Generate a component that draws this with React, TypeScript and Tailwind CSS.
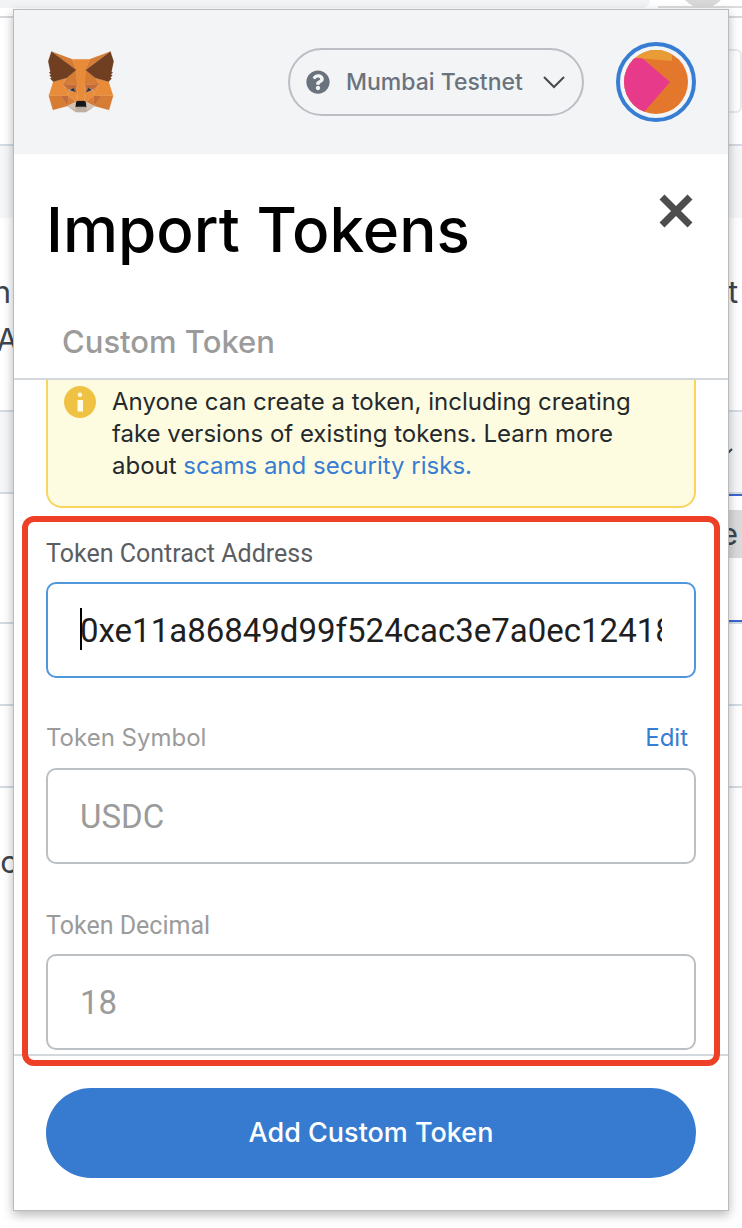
import type { ReactNode } from "react";
import { FaQuestionCircle } from "react-icons/fa";

function Fox() {
  const shapes: [string, string[]][] = [
    ["#d67c35", [
      "274.1,35.5 174.6,109.4 193,65.8",
      "44.4,35.5 143.1,110.1 125.6,65.8",
      "238.3,206.8 211.8,247.4 268.5,263 284.8,207.7",
      "33.9,207.7 50.1,263 106.8,247.4 80.3,206.8",
      "103.6,138.2 87.8,162.1 144.1,164.6 142.1,104.1",
      "214.9,138.2 175.9,103.4 174.6,164.6 230.8,162.1",
      "106.8,247.4 140.6,230.9 111.4,208.1",
      "177.9,230.9 211.8,247.4 207.1,208.1",
    ]],
    ["#d5c3b6", [
      "211.8,247.4 177.9,230.9 180.6,253 180.3,262.3",
      "106.8,247.4 138.3,262.3 138.1,253 140.6,230.9",
    ]],
    ["#c46b37", [
      "106.8,247.4 111.6,206.8 80.3,207.7",
      "207,206.8 211.8,247.4 238.3,207.7",
      "230.8,162.1 174.6,164.6 179.8,193.5 188.1,176.1 208.1,185.2",
      "110.6,185.2 130.6,176.1 138.8,193.5 144.1,164.6 87.8,162.1",
    ]],
    ["#e18537", [
      "87.8,162.1 111.4,208.1 110.6,185.2",
      "208.1,185.2 207.1,208.1 230.8,162.1",
      "144.1,164.6 138.8,193.5 145.4,227.6 146.9,182.7",
      "174.6,164.6 171.9,182.6 173.1,227.6 179.8,193.5",
    ]],
    ["#e88c3a", [
      "179.8,193.5 173.1,227.6 177.9,230.9 207.1,208.1 208.1,185.2",
      "110.6,185.2 111.4,208.1 140.6,230.9 145.4,227.6 138.8,193.5",
      "267.2,153.5 214.9,138.2 230.8,162.1 207.1,208.1 238.3,207.7 284.8,207.7",
      "103.6,138.2 51.3,153.5 33.9,207.7 80.3,207.7 111.4,208.1 87.8,162.1",
      "174.6,164.6 177.9,106.9 193.1,65.8 125.6,65.8 140.6,106.9 144.1,164.6 145.3,182.8 145.4,227.6 173.1,227.6 173.3,182.8",
    ]],
    ["#2a3544", [
      "138.8,193.5 115,185.5 130.5,176.1",
      "179.7,193.5 188,176.1 203,185.5",
    ]],
    ["#bfae9f", [
      "180.3,262.3 180.6,253 178.1,250.8 140.4,250.8 138.1,253 138.3,262.3 106.8,247.4 117.8,256.4 140.1,271.9 178.4,271.9 200.8,256.4 211.8,247.4",
    ]],
    ["#161616", [
      "177.9,230.9 173.1,227.6 145.4,227.6 140.6,230.9 138.1,253 140.4,250.8 178.1,250.8 180.6,253",
    ]],
    ["#703f22", [
      "278.3,114.2 286.8,73.4 274.1,35.5 177.9,106.9 214.9,138.2 267.2,153.5 278.8,140 273.8,136.4 281.8,129.1 275.6,124.3 283.6,118.2",
      "31.8,73.4 40.3,114.2 34.9,118.2 42.9,124.3 36.8,129.1 44.8,136.4 39.8,140 51.3,153.5 103.6,138.2 140.6,106.9 44.4,35.5",
    ]],
  ];
  return (
    <svg viewBox="31 34 257 240" className="h-[62px] w-[66px]" aria-label="MetaMask" role="img">
      {shapes.map(([fill, polys]) =>
        polys.map((points) => (
          <polygon key={points} points={points} fill={fill} stroke={fill} strokeWidth="0.6" />
        )),
      )}
    </svg>
  );
}

function Avatar() {
  return (
    <button
      type="button"
      aria-label="Account"
      className="size-20 shrink-0 rounded-full border-4 border-[#377dd3] p-1"
    >
      <svg viewBox="0 0 64 64" className="size-16 rounded-full">
        <rect width="64" height="64" fill="#e3782d" />
        <path d="M0 0H48V11L0 7Z" fill="#e99b36" />
        <path d="M0 7L18.6 8.6L46 32L20.5 61.5L18 64H0Z" fill="#e83a8a" />
      </svg>
    </button>
  );
}

function Strip({ className, left, right }: { className: string; left?: ReactNode; right?: ReactNode }) {
  return (
    <div className={`flex shrink-0 justify-between text-[31px] text-[#3d454e] ${className}`}>
      <div className="flex w-[14px] items-center justify-end">{left}</div>
      <div className="flex w-[14px] items-center">{right}</div>
    </div>
  );
}

/* The browser page that shows on both sides of the extension window. */
function Backdrop() {
  return (
    <div aria-hidden="true" className="absolute inset-0 flex flex-col overflow-hidden bg-white">
      <div className="flex h-2 shrink-0 justify-between">
        <div className="w-[650px] rounded-br-lg bg-[#f1f3f4]" />
        <div className="relative w-[84px] border-b-2 border-[#dcdcdc]">
          <div className="absolute -top-10 left-[21px] size-12 rounded-full bg-[#d8d8d8]" />
        </div>
      </div>
      <Strip className="h-[10px] border-b-2 border-[#d6d8db]" />
      <Strip
        className="h-32 border-b-2 border-[#d3dbe4]"
        right={<div className="h-16 w-[14px] rounded-r-md border-2 border-l-0 border-[#e6eaee]" />}
      />
      <Strip className="h-[72px] bg-[#f5f6f8]" />
      <Strip className="h-[50px]" />
      <Strip className="h-12" left={<span className="pr-[3px]">n</span>} right="t" />
      <Strip className="h-12" left={<span className="-mr-[4px]">A</span>} />
      <Strip className="h-[46px]" />
      <Strip
        className="h-[84px] border-y-2 border-[#d3dbe4] bg-[#f5f6f8]"
        right={
          <svg viewBox="0 0 14 14" className="size-[14px]">
            <path d="M0 8L4 4" stroke="#3d454e" strokeWidth="2" />
          </svg>
        }
      />
      <div className="flex h-[130px] shrink-0 justify-between border-b-2 border-[#d3dbe4]">
        <div className="w-[14px]" />
        <div className="flex w-[14px] flex-col border-y-2 border-[#3b68d0] pt-[14px] text-[31px] text-[#3d454e]">
          <span className="-ml-[8px] bg-[#dadada] leading-[48px]">e</span>
        </div>
      </div>
      <Strip className="h-[82px] border-b-2 border-[#d3dbe4]" />
      <Strip className="h-[82px] border-b-2 border-[#d3dbe4]" />
      <Strip className="h-[50px]" />
      <Strip className="h-12" left={<span className="-mr-[4px]">c</span>} />
    </div>
  );
}

const labelText = "font-[Roboto,sans-serif] text-[25px] leading-8";
const fieldBox =
  "block h-24 w-full rounded-[10px] border-2 bg-white px-8 font-[Roboto,sans-serif] text-[33px] outline-none";

export default function App() {
  return (
    <div className="relative min-h-screen overflow-hidden bg-white px-[13px] pt-[9px] pb-4 font-[Inter,sans-serif]">
      <Backdrop />
      <div className="relative border border-[#b9bbbd] bg-white shadow-[0_4px_10px_rgba(0,0,0,0.28)]">
        <header className="flex h-36 items-center gap-8 bg-[#f2f4f6] px-8">
          <div className="flex-1 pl-[2px]">
            <Fox />
          </div>
          <button
            type="button"
            className="flex h-[68px] w-[296px] items-center rounded-full border-2 border-[#bbbfc5] px-4 text-[23px] font-medium text-[#6a737d]"
          >
            <FaQuestionCircle className="size-6" />
            <span className="flex-1 pl-4 text-left">Mumbai Testnet</span>
            <svg viewBox="0 0 24 14" className="h-[14px] w-6" fill="none">
              <path d="M2 2L12 12L22 2" stroke="#484848" strokeWidth="2" />
            </svg>
          </button>
          <Avatar />
        </header>

        <section className="border-b-2 border-[#d3d8dc]">
          <div className="flex items-start justify-between px-8 pt-9">
            <h1 className="text-[62px] leading-20 font-medium text-black">Import Tokens</h1>
            <button type="button" aria-label="Close" className="mt-1 pr-[3px]">
              <svg viewBox="0 0 34 34" className="size-[34px]">
                <path d="M3 3L31 31M31 3L3 31" stroke="#4d4d4d" strokeWidth="7" />
              </svg>
            </button>
          </div>
          <h2 className="px-12 pt-12 pb-3 text-[31px] leading-12 font-medium text-[#9b9b9b]">Custom Token</h2>
        </section>

        <main className="px-8 pb-1">
          <div className="flex gap-4 rounded-b-2xl border-2 border-t-0 border-[#f8d55f] bg-[#fefce0] px-4 pt-[6px] pb-6">
            <svg viewBox="0 0 32 32" className="size-8 shrink-0">
              <circle cx="16" cy="16" r="16" fill="#f0c244" />
              <circle cx="16" cy="8.8" r="2.2" fill="#fffde8" />
              <path d="M13.5 14h5.5V25.5h-5.5z" fill="#fffde8" />
            </svg>
            <p className="text-[24px] leading-8 text-[#24292e]">
              Anyone can create a token, including creating
              <br />
              fake versions of existing tokens. Learn more
              <br />
              about{" "}
              <a href="#risks" className="text-[#377dd3]">
                scams and security risks.
              </a>
            </p>
          </div>

          <form className="relative pt-[30px]">
            <label htmlFor="address" className={`${labelText} mb-3 block text-[#5b5d60]`}>
              Token Contract Address
            </label>
            <div className="relative">
              <input
                id="address"
                defaultValue="0xe11a86849d99f524cac3e7a0ec12418"
                className={`${fieldBox} border-[#4f97dc] text-[#1f1f1f]`}
              />
              <span aria-hidden="true" className="absolute top-[26px] left-[34px] h-[42px] w-[2px] bg-black" />
            </div>

            <div className="mt-[42px] mb-3 flex h-9 items-center justify-between pr-2 text-[24px]">
              <label htmlFor="symbol" className="text-[#9b9b9b]">
                Token Symbol
              </label>
              <button type="button" className="text-[#377dd3]">
                Edit
              </button>
            </div>
            <input id="symbol" placeholder="USDC" className={`${fieldBox} border-[#bbc0c5] placeholder:text-[#9b9b9b]`} />

            <label htmlFor="decimal" className={`${labelText} mt-[46px] mb-3 block text-[#9b9b9b]`}>
              Token Decimal
            </label>
            <input id="decimal" placeholder="18" className={`${fieldBox} border-[#bbc0c5] placeholder:text-[#9b9b9b]`} />

            <div
              aria-hidden="true"
              className="pointer-events-none absolute -inset-x-6 top-2 z-10 -bottom-4 rounded-xl border-[6px] border-[#ed4027]"
            />
          </form>
        </main>

        <footer className="border-t-2 border-[#d3d8dc] p-8">
          <button
            type="button"
            className="block h-[90px] w-full rounded-full bg-[#377bd0] text-[27px] font-medium text-white"
          >
            Add Custom Token
          </button>
        </footer>
      </div>
    </div>
  );
}
